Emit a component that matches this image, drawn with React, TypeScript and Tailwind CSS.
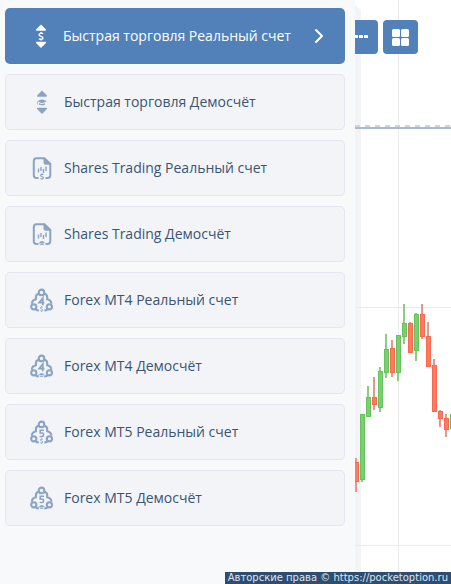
import type { ReactNode } from 'react';
import { ChevronRight } from 'lucide-react';

type Variant = 'real' | 'demo';

const GREEN = '#66c35b';
const RED = '#f9694f';

// x center, wick top, body top, body bottom, wick bottom
const candles: { x: number; high: number; top: number; bottom: number; low: number; up: boolean }[] = [
  { x: 1, high: 458, top: 462, bottom: 481, low: 492, up: false },
  { x: 7, high: 414, top: 414, bottom: 479, low: 482, up: true },
  { x: 13, high: 386, top: 397, bottom: 416, low: 416, up: true },
  { x: 19, high: 377, top: 397, bottom: 404, low: 410, up: false },
  { x: 25, high: 367, top: 371, bottom: 407, low: 412, up: true },
  { x: 31, high: 334, top: 349, bottom: 372, low: 378, up: true },
  { x: 37, high: 340, top: 348, bottom: 372, low: 377, up: false },
  { x: 43, high: 335, top: 335, bottom: 372, low: 381, up: true },
  { x: 49, high: 304, top: 323, bottom: 336, low: 344, up: true },
  { x: 55, high: 322, top: 323, bottom: 352, low: 352, up: false },
  { x: 61, high: 313, top: 314, bottom: 350, low: 361, up: true },
  { x: 67, high: 304, top: 314, bottom: 336, low: 339, up: false },
  { x: 73, high: 322, top: 336, bottom: 366, low: 367, up: false },
  { x: 79, high: 359, top: 365, bottom: 411, low: 411, up: false },
  { x: 85, high: 410, top: 411, bottom: 418, low: 427, up: false },
  { x: 91, high: 414, top: 418, bottom: 429, low: 437, up: false },
  { x: 97, high: 414, top: 414, bottom: 428, low: 428, up: true },
];

const Dollar = ({ transform }: { transform?: string }) => (
  <g transform={transform} fill="none" stroke="currentColor" strokeWidth="1.4">
    <path d="M2 -2.4C1.4 -3.2 -2 -3.4 -2 -1.5C-2 0.2 2 -0.2 2 1.6C2 3.4 -1.4 3.2 -2.1 2.3" />
    <path d="M0 -4.2V-2.8M0 2.8V4.2" />
  </g>
);

const Cap = ({ transform }: { transform?: string }) => (
  <g transform={transform} fill="currentColor">
    <path d="M-5 -1L0 -3L5 -1L0 1Z" />
    <path d="M-3 0.7L0 2L3 0.7V2.2C2 3.4 -2 3.4 -3 2.2Z" />
    <path d="M-4.6 -0.8H-4V2.2H-4.6Z" />
  </g>
);

const QuickIcon = ({ variant }: { variant: Variant }) => (
  <svg viewBox="0 0 24 24" className="size-6 shrink-0" aria-hidden="true">
    <path d="M12 0.6L17.2 5.8Q17 6.8 16 6.8H8Q7 6.8 6.8 5.8Z" fill="currentColor" />
    <path d="M12 24L17.2 18.8Q17 17.8 16 17.8H8Q7 17.8 6.8 18.8Z" fill="currentColor" />
    {variant === 'real' ? <Dollar transform="translate(12 12.3)" /> : <Cap transform="translate(12 12.3)" />}
  </svg>
);

const SharesIcon = ({ variant }: { variant: Variant }) => (
  <svg viewBox="0 0 24 24" className="size-6 shrink-0" aria-hidden="true">
    <path
      d="M8.5 22H6.5Q3.8 22 3.8 19.3V5Q3.8 2.2 6.5 2.2H14.5L20.3 8V19.3Q20.3 22 17.5 22H15.5"
      fill="none"
      stroke="currentColor"
      strokeWidth="2"
    />
    <path d="M13.5 1.4L21 8.8H16Q13.5 8.8 13.5 6.8Z" fill="currentColor" />
    <path d="M8.5 12.5V16.5M11 11V15M13.5 13V17M16 10.5V15" stroke="currentColor" strokeWidth="1.4" />
    {variant === 'real' ? (
      <Dollar transform="translate(12 20.6) scale(0.75)" />
    ) : (
      <Cap transform="translate(12 21) scale(0.65)" />
    )}
  </svg>
);

const ForexIcon = ({ version, variant }: { version: 4 | 5; variant: Variant }) => (
  <svg viewBox="0 0 24 24" className="size-6 shrink-0" aria-hidden="true">
    <g fill="none" stroke="currentColor" strokeWidth="2.1">
      <circle cx="11.5" cy="4.4" r="2.8" />
      <circle cx="3.8" cy="18.8" r="2.6" />
      <circle cx="19.4" cy="18.8" r="2.6" />
      <path d="M9 5.8Q5.7 6.4 5.9 9.5V11.3Q2 12 1.8 15.8" />
      <path d="M14 5.8Q17.4 6.4 17.2 9.5V11.3Q21.2 12 21.4 15.8" />
      <path d="M5.4 21Q6.8 22.6 8.8 22.3M17.8 21Q16.4 22.6 14.3 22.3" />
    </g>
    {version === 4 ? (
      <path d="M12.8 17.2V10L9.2 14.6H14.4" fill="none" stroke="currentColor" strokeWidth="1.8" />
    ) : (
      <path
        d="M14 10.3H10.2V13H12Q13.6 13 13.6 14.8Q13.6 16.5 12 16.5H9.6"
        fill="none"
        stroke="currentColor"
        strokeWidth="1.6"
      />
    )}
    {variant === 'real' ? (
      <Dollar transform="translate(11.6 21) scale(0.65)" />
    ) : (
      <Cap transform="translate(11.6 20.9) scale(0.65)" />
    )}
  </svg>
);

const menuItems: { label: string; icon: ReactNode; active?: boolean }[] = [
  { label: 'Быстрая торговля Реальный счет', icon: <QuickIcon variant="real" />, active: true },
  { label: 'Быстрая торговля Демосчёт', icon: <QuickIcon variant="demo" /> },
  { label: 'Shares Trading Реальный счет', icon: <SharesIcon variant="real" /> },
  { label: 'Shares Trading Демосчёт', icon: <SharesIcon variant="demo" /> },
  { label: 'Forex MT4 Реальный счет', icon: <ForexIcon version={4} variant="real" /> },
  { label: 'Forex MT4 Демосчёт', icon: <ForexIcon version={4} variant="demo" /> },
  { label: 'Forex MT5 Реальный счет', icon: <ForexIcon version={5} variant="real" /> },
  { label: 'Forex MT5 Демосчёт', icon: <ForexIcon version={5} variant="demo" /> },
];

const Chart = () => (
  <svg className="absolute inset-0 h-full w-full" shapeRendering="crispEdges" aria-hidden="true">
    <path d="M0 5L6 11V2000H0Z" fill="#f3f4f6" />
    <path d="M43.5 0V2000M0 307.5H2000M0 545.5H2000" stroke="#e9ebee" />
    <path d="M0 126H2000" stroke="#ccd5e0" strokeWidth="2" strokeDasharray="5 5" />
    <path d="M0 128H2000" stroke="#a9bacb" strokeWidth="2" />
    {candles.map((c) => (
      <g key={c.x}>
        <rect x={c.x - 1} y={c.high} width="2" height={c.low - c.high} fill={c.up ? '#8fca88' : '#e6998a'} />
        <rect
          x={c.x - 2}
          y={c.top}
          width="4"
          height={c.bottom - c.top}
          fill={c.up ? '#78d06e' : '#ff7a60'}
          stroke={c.up ? GREEN : RED}
        />
      </g>
    ))}
  </svg>
);

const AccountMenu = () => (
  <nav className="relative z-10 w-[355px] shrink-0 bg-[#f7f9fb] pt-2 pr-[10px] pb-4 pl-[5px]">
    <ul className="flex flex-col gap-[10px]">
      {menuItems.map((item) => (
        <li key={item.label}>
          <a
            href="#"
            className={
              item.active
                ? 'flex h-14 items-center gap-[10px] rounded-[5px] bg-[#5181b8] px-6 text-white'
                : 'flex h-14 items-center gap-[10px] rounded-[5px] border border-[#e4e7f1] bg-[#f3f4f7] px-6 text-[#8ba4c3]'
            }
          >
            {item.icon}
            <span className={item.active ? 'flex-1 whitespace-nowrap' : 'flex-1 whitespace-nowrap text-[#3a5474]'}>
              {item.label}
            </span>
            {item.active && <ChevronRight className="-mr-[10px] size-6" strokeWidth={2} />}
          </a>
        </li>
      ))}
    </ul>
  </nav>
);

const ToolBar = () => (
  <div className="relative -ml-3 flex gap-[5px] pt-5">
    <button
      type="button"
      aria-label="Ещё"
      className="flex h-[34px] w-[35px] shrink-0 items-center justify-center rounded-[4px] bg-[#5181b8] text-white"
    >
      <svg viewBox="0 0 14 4" className="h-1 w-3.5" fill="currentColor" aria-hidden="true">
        <rect x="0" y="0" width="4" height="3" rx="0.5" />
        <rect x="5" y="0" width="4" height="3" rx="0.5" />
        <rect x="10" y="0" width="4" height="3" rx="0.5" />
      </svg>
    </button>
    <button
      type="button"
      aria-label="Раскладка"
      className="flex h-[34px] w-[35px] shrink-0 items-center justify-center rounded-[4px] bg-[#5181b8] text-white"
    >
      <svg viewBox="0 0 17 17" className="size-[17px]" fill="currentColor" aria-hidden="true">
        <rect width="8" height="8" rx="1.5" />
        <rect x="9" width="8" height="8" rx="1.5" />
        <rect y="9" width="8" height="8" rx="1.5" />
        <rect x="9" y="9" width="8" height="8" rx="1.5" />
      </svg>
    </button>
  </div>
);

const App = () => {
  return (
    <div className="relative flex min-h-screen overflow-hidden bg-white font-['Open_Sans',sans-serif] text-sm">
      <AccountMenu />
      <main className="relative min-w-0 flex-1">
        <Chart />
        <ToolBar />
      </main>
      <footer className="absolute right-0 bottom-0 z-20 bg-[#2f4d70] pr-[3px] pl-[3px] font-['DejaVu_Sans',sans-serif] text-[10px] leading-3 whitespace-nowrap text-[#dbe4ee]">
        Авторские права © https://pocketoption.ru
      </footer>
    </div>
  );
};

export default App;
